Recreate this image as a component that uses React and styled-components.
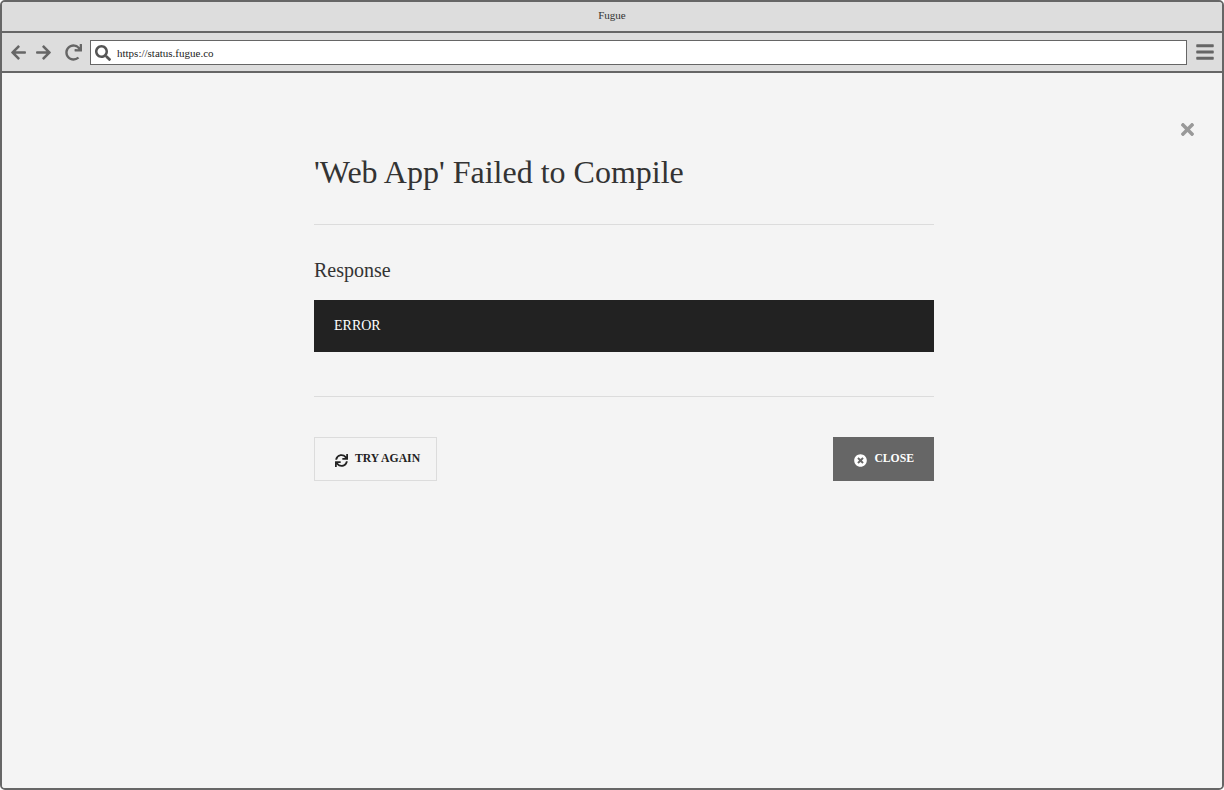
import React from "react";
import styled, { createGlobalStyle } from "styled-components";
import {
  FaArrowLeft,
  FaArrowRight,
  FaRedo,
  FaSearch,
  FaBars,
  FaTimes,
  FaTimesCircle,
  FaSync,
} from "react-icons/fa";

const Global = createGlobalStyle`
  html, body { margin: 0; padding: 0; }
  body { font-family: "Liberation Serif", "Times New Roman", serif; color: #333; }
  * { box-sizing: border-box; }
`;

const Frame = styled.div`
  width: 1224px;
  height: 790px;
  border: 2px solid #666;
  border-radius: 5px;
  display: flex;
  flex-direction: column;
  overflow: hidden;
  background: #f4f4f4;
`;

const TitleBar = styled.div`
  height: 31px;
  background: #dddddd;
  border-bottom: 2px solid #666;
  display: flex;
  align-items: center;
  justify-content: center;
  font-size: 11px;
  color: #333;
  padding-bottom: 3px;
`;

const Toolbar = styled.div`
  height: 40px;
  background: #dddddd;
  border-bottom: 2px solid #666;
  display: flex;
  align-items: center;
  padding: 0 7px 0 8px;
`;

const NavButton = styled.span`
  display: inline-flex;
  align-items: center;
  justify-content: center;
  width: ${(p) => p.$w || 17}px;
  margin-right: ${(p) => p.$mr || 0}px;
  color: #666;
  font-size: 17px;
`;

const AddressBar = styled.div`
  flex: 1;
  height: 25px;
  margin-left: 8px;
  margin-top: 1px;
  border: 1px solid #666;
  background: #fff;
  display: flex;
  align-items: center;
  padding-left: 4px;
  font-size: 11px;
  color: #222;
`;

const SearchIcon = styled.span`
  display: inline-flex;
  color: #555;
  font-size: 16px;
  margin-right: 6px;
`;

const Menu = styled.span`
  display: inline-flex;
  color: #666;
  font-size: 20px;
  margin-left: 8px;
`;

const Content = styled.main`
  position: relative;
  flex: 1;
  background: #f4f4f4;
  padding: 83px 0 0 312px;
`;

const Dismiss = styled.span`
  position: absolute;
  top: 47px;
  right: 25px;
  color: #999;
  font-size: 19px;
  display: inline-flex;
`;

const Dialog = styled.section`
  width: 620px;
`;

const Title = styled.h1`
  margin: 0;
  font-size: 32px;
  line-height: 32px;
  font-weight: normal;
  color: #333;
`;

const Rule = styled.hr`
  margin: ${(p) => p.$top}px 0 0;
  border: 0;
  height: 1px;
  background: #dcdcdc;
`;

const Section = styled.h2`
  margin: 35px 0 0;
  font-size: 20px;
  line-height: 20px;
  font-weight: normal;
  color: #333;
`;

const Output = styled.pre`
  margin: 20px 0 0;
  height: 52px;
  background: #222;
  color: #fff;
  display: flex;
  align-items: center;
  padding: 0 20px;
  font-family: "Liberation Serif", "Times New Roman", serif;
  font-size: 14px;
`;

const Actions = styled.div`
  margin-top: 40px;
  display: flex;
  justify-content: space-between;
`;

const Button = styled.button`
  height: 44px;
  display: inline-flex;
  align-items: center;
  gap: 7px;
  padding: 0 ${(p) => (p.$primary ? 20 : 16)}px 2px ${(p) => (p.$primary ? 21 : 20)}px;
  border: ${(p) => (p.$primary ? "0" : "1px solid #dcdcdc")};
  background: ${(p) => (p.$primary ? "#666" : "#f4f4f4")};
  color: ${(p) => (p.$primary ? "#fff" : "#222")};
  font-family: "Liberation Serif", "Times New Roman", serif;
  font-weight: bold;
  font-size: 11.7px;
  cursor: pointer;
  svg {
    font-size: 13px;
    margin-top: 4px;
  }
`;

export default function App() {
  return (
    <>
      <Global />
      <Frame>
        <TitleBar>Fugue</TitleBar>
        <Toolbar>
          <NavButton $mr={8}><FaArrowLeft /></NavButton>
          <NavButton $mr={13}><FaArrowRight /></NavButton>
          <NavButton><FaRedo /></NavButton>
          <AddressBar>
            <SearchIcon><FaSearch /></SearchIcon>
            https://status.fugue.co
          </AddressBar>
          <Menu><FaBars /></Menu>
        </Toolbar>
        <Content>
          <Dismiss><FaTimes /></Dismiss>
          <Dialog>
            <Title>'Web App' Failed to Compile</Title>
            <Rule $top={36} />
            <Section>Response</Section>
            <Output>ERROR</Output>
            <Rule $top={44} />
            <Actions>
              <Button><FaSync />TRY AGAIN</Button>
              <Button $primary><FaTimesCircle />CLOSE</Button>
            </Actions>
          </Dialog>
        </Content>
      </Frame>
    </>
  );
}
